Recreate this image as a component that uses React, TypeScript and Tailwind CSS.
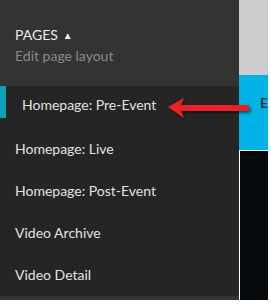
import React from "react";

const pages = [
  { label: "Homepage: Pre-Event", active: true },
  { label: "Homepage: Live" },
  { label: "Homepage: Post-Event" },
  { label: "Video Archive" },
  { label: "Video Detail" },
];

export default function App() {
  return (
    <div
      className="relative w-[271px] h-[307px] bg-white overflow-hidden"
      style={{ fontFamily: "Lato, 'Open Sans', sans-serif" }}
    >
      <div className="flex w-[268px] h-[300px]">
        {/* Sidebar */}
        <div className="flex flex-col w-[241px] h-full bg-[#252525]">
          <div className="h-[87px] bg-[#333333] px-[15px] pt-[26px]">
            <div className="flex items-center gap-[5px] text-[14px] leading-[18px] text-[#ececec]">
              <span>PAGES</span>
              <span className="text-[10px] leading-none">▲</span>
            </div>
            <div className="mt-[3px] text-[14px] leading-[18px] text-[#8a8a8a]">
              Edit page layout
            </div>
          </div>

          <div className="flex flex-col flex-1">
            {pages.map((p, i) => (
              <div
                key={p.label}
                className={`relative flex items-center text-[14px] text-[#e2e2e2] ${
                  i === 0 ? "h-[38px] pl-[22px]" : "h-[42.3px] pl-[15px]"
                } ${i === 1 ? "mt-[3px]" : ""}`}
              >
                {p.active && (
                  <span className="absolute left-0 top-0 w-[6px] h-[32px] bg-[#0aa2b4]" />
                )}
                {p.label}
              </div>
            ))}
          </div>
          <div className="h-[4px] bg-[#333333]" />
        </div>

        {/* Preview strip */}
        <div className="flex flex-col flex-1 h-full">
          <div className="h-[75px] bg-[#cccccc]" />
          <div className="h-[75px] bg-[#00b3e6] pl-[21px] pt-[17px] text-[14px] font-bold text-[#2d3a40]">
            E
          </div>
          <div className="flex-1 bg-[#06090b] border-t border-l border-white" />
        </div>
      </div>

      {/* Red arrow callout */}
      <svg
        className="absolute left-[160px] top-[92px]"
        width="100"
        height="34"
        viewBox="0 0 100 34"
      >
        <defs>
          <filter id="sh" x="-20%" y="-50%" width="140%" height="200%">
            <feDropShadow dx="1.5" dy="2" stdDeviation="1.5" floodColor="#000" floodOpacity="0.55" />
          </filter>
        </defs>
        <g filter="url(#sh)">
          <path d="M8 15 L24 6 L21 13 L89 13 L89 19 L21 19 L24 26 Z" fill="#ea2128" />
        </g>
      </svg>
    </div>
  );
}
